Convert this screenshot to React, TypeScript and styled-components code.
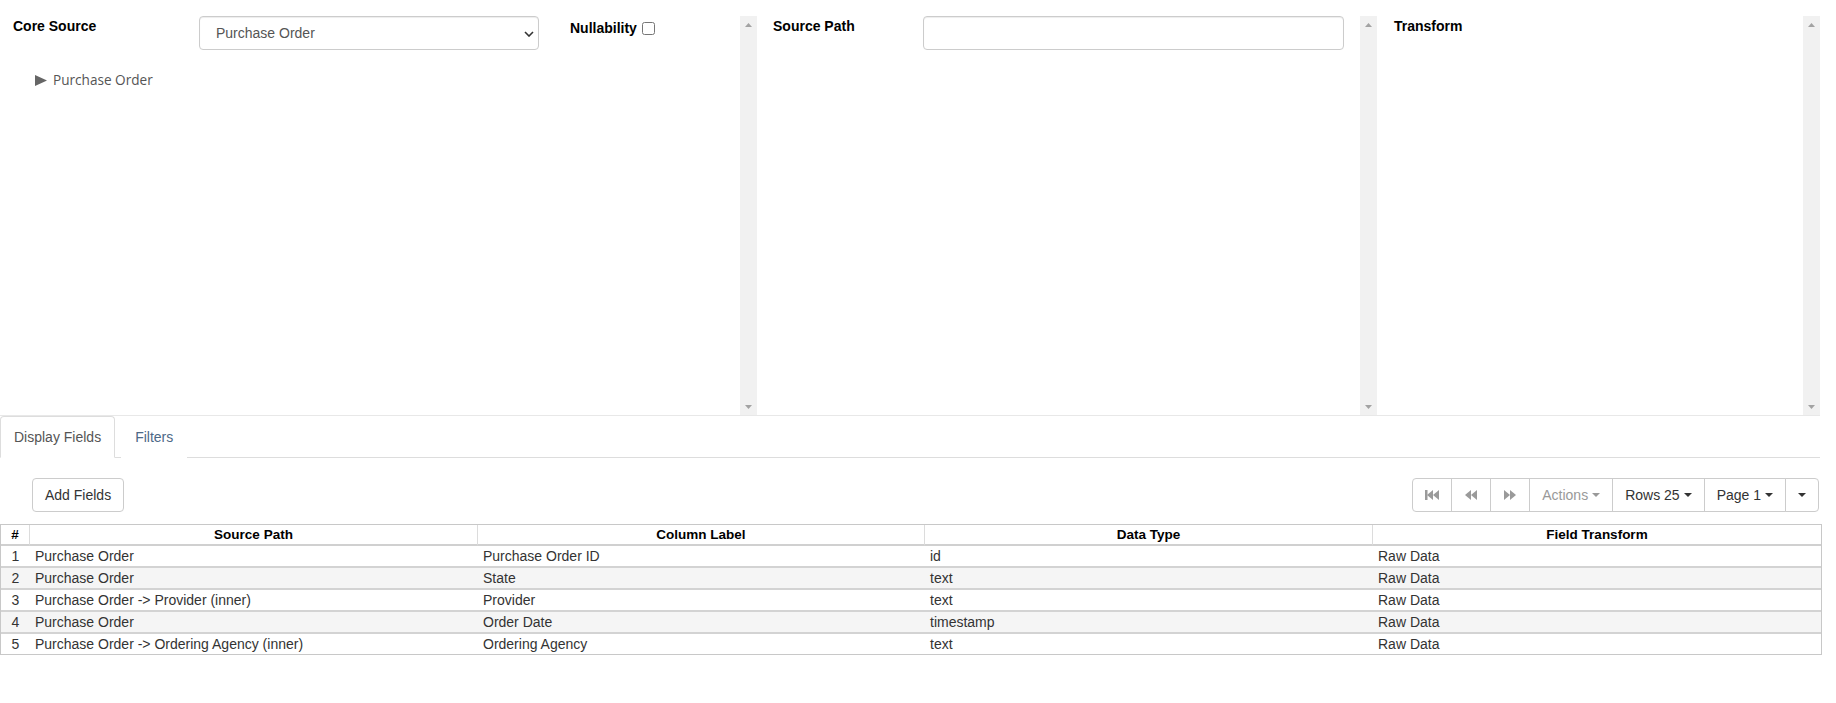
import styled, { createGlobalStyle } from "styled-components";

const GlobalStyle = createGlobalStyle`
  * {
    box-sizing: border-box;
  }
  body {
    margin: 0;
    background: #fff;
    font-family: "Liberation Sans", Arial, sans-serif;
    font-size: 14px;
    color: #333;
  }
`;

const fields = [
  { path: "Purchase Order", label: "Purchase Order ID", type: "id", transform: "Raw Data" },
  { path: "Purchase Order", label: "State", type: "text", transform: "Raw Data" },
  { path: "Purchase Order -> Provider (inner)", label: "Provider", type: "text", transform: "Raw Data" },
  { path: "Purchase Order", label: "Order Date", type: "timestamp", transform: "Raw Data" },
  { path: "Purchase Order -> Ordering Agency (inner)", label: "Ordering Agency", type: "text", transform: "Raw Data" },
];

const Page = styled.div`
  width: 1820px;
`;

/* ---------- top panels ---------- */

const PanelRow = styled.div`
  display: flex;
  margin-top: 16px;
  height: 400px;
  border-bottom: 1px solid #e8e8e8;
`;

const Panel = styled.section<{ $width: number }>`
  display: flex;
  width: ${({ $width }) => $width}px;
  height: 100%;
`;

const PanelBody = styled.div<{ $pad: number }>`
  flex: 1;
  padding: 0 16px 0 ${({ $pad }) => $pad}px;
`;

const ScrollTrack = styled.div`
  width: 17px;
  background: #f1f1f1;
  display: flex;
  flex-direction: column;
  justify-content: space-between;
`;

const ScrollArrow = styled.div`
  height: 17px;
  display: flex;
  align-items: center;
  justify-content: center;
`;

const FieldRow = styled.div`
  display: flex;
  align-items: flex-start;
`;

const FieldLabel = styled.label<{ $width?: number }>`
  width: ${({ $width }) => ($width ? `${$width}px` : "auto")};
  font-weight: bold;
  line-height: 20px;
  color: #000;
`;

const SelectWrap = styled.div`
  position: relative;
  width: 340px;
`;

const Select = styled.select`
  appearance: none;
  width: 100%;
  height: 34px;
  padding: 6px 30px 6px 16px;
  border: 1px solid #ccc;
  border-radius: 4px;
  background: #fff;
  box-shadow: inset 0 1px 1px rgba(0, 0, 0, 0.075);
  font-family: "Liberation Sans", Arial, sans-serif;
  font-size: 14px;
  color: #555;
`;

const Chevron = styled.svg`
  position: absolute;
  right: 5px;
  top: 15px;
  pointer-events: none;
`;

const NullLabel = styled.label`
  display: flex;
  align-items: center;
  height: 24px;
  margin-left: 31px;
  font-weight: bold;
  color: #000;

  input {
    margin: 0 0 0 5px;
    width: 13px;
    height: 13px;
  }
`;

const TextInput = styled.input`
  width: 421px;
  height: 34px;
  padding: 6px 12px;
  border: 1px solid #ccc;
  border-radius: 4px;
  box-shadow: inset 0 1px 1px rgba(0, 0, 0, 0.075);
  font-size: 14px;
`;

const TreeNode = styled.div`
  display: flex;
  align-items: center;
  gap: 6px;
  margin-top: 20px;
  padding-left: 22px;
  line-height: 20px;
  font-family: "Open Sans", "DejaVu Sans", sans-serif;
  font-size: 13.6px;
  color: #555;
`;

/* ---------- tabs ---------- */

const TabBar = styled.nav`
  display: flex;
  border-bottom: 1px solid #ddd;
`;

const Tab = styled.div<{ $active?: boolean }>`
  padding: 10px 13px;
  margin-right: 6px;
  margin-bottom: -1px;
  line-height: 20px;
  border: 1px solid ${({ $active }) => ($active ? "#ddd" : "transparent")};
  border-bottom-color: ${({ $active }) => ($active ? "#fff" : "transparent")};
  border-radius: 4px 4px 0 0;
  background: #fff;
  color: ${({ $active }) => ($active ? "#555" : "#4d6886")};
`;

const TabContent = styled.div`
  padding-top: 20px;
`;

const Toolbar = styled.div`
  display: flex;
  justify-content: space-between;
  align-items: center;
  padding: 0 1px 0 32px;
  margin-bottom: 12px;
`;

const Button = styled.button<{ $muted?: boolean }>`
  display: inline-flex;
  align-items: center;
  height: 34px;
  padding: 6px 12px;
  border: 1px solid #ccc;
  border-radius: 4px;
  background: #fff;
  font-family: "Liberation Sans", Arial, sans-serif;
  font-size: 14px;
  line-height: 20px;
  color: ${({ $muted }) => ($muted ? "#999" : "#333")};
`;

const ButtonGroup = styled.div`
  display: flex;

  ${Button} {
    border-radius: 0;
  }
  ${Button} + ${Button} {
    margin-left: -1px;
  }
  ${Button}:first-child {
    border-radius: 4px 0 0 4px;
  }
  ${Button}:last-child {
    border-radius: 0 4px 4px 0;
  }
`;

const Caret = styled.span<{ $bare?: boolean }>`
  display: inline-block;
  width: 0;
  height: 0;
  margin-left: ${({ $bare }) => ($bare ? 0 : 4)}px;
  border-top: 4px solid currentColor;
  border-left: 4px solid transparent;
  border-right: 4px solid transparent;
`;

const IconSvg = styled.svg`
  display: block;
  fill: #9a9a9a;
`;

/* ---------- table ---------- */

const Table = styled.table`
  width: 1820px;
  table-layout: fixed;
  border-collapse: separate;
  border-spacing: 0;
  border: 1px solid #c8c8c8;
`;

const Th = styled.th`
  padding: 1px 4px;
  line-height: 17px;
  font-size: 13.5px;
  font-weight: bold;
  color: #000;
  text-align: center;
  border-bottom: 2px solid #d0d0d0;
  border-right: 1px solid #dcdcdc;

  &:last-child {
    border-right: none;
  }
`;

const Row = styled.tr<{ $striped: boolean }>`
  background: ${({ $striped }) => ($striped ? "#f5f5f5" : "#fff")};

  &:last-child td {
    border-bottom: none;
  }
`;

const Td = styled.td<{ $center?: boolean }>`
  padding: 1px 5px;
  line-height: 18px;
  white-space: nowrap;
  overflow: hidden;
  text-align: ${({ $center }) => ($center ? "center" : "left")};
  border-bottom: 2px solid #d3d3d3;
`;

function Scrollbar() {
  return (
    <ScrollTrack>
      <ScrollArrow>
        <svg width="7" height="4" viewBox="0 0 7 4">
          <polygon points="3.5,0 7,4 0,4" fill="#a3a3a3" />
        </svg>
      </ScrollArrow>
      <ScrollArrow>
        <svg width="7" height="4" viewBox="0 0 7 4">
          <polygon points="0,0 7,0 3.5,4" fill="#a3a3a3" />
        </svg>
      </ScrollArrow>
    </ScrollTrack>
  );
}

function FastBackwardIcon() {
  return (
    <IconSvg width="14" height="10" viewBox="0 0 14 10">
      <rect x="0" y="0" width="2.5" height="10" />
      <polygon points="2,5 8,0 8,10" />
      <polygon points="8,5 14,0 14,10" />
    </IconSvg>
  );
}

function BackwardIcon() {
  return (
    <IconSvg width="14" height="10" viewBox="0 0 14 10">
      <polygon points="1,5 7,0 7,10" />
      <polygon points="7,5 13,0 13,10" />
    </IconSvg>
  );
}

function ForwardIcon() {
  return (
    <IconSvg width="14" height="10" viewBox="0 0 14 10">
      <polygon points="1,0 7,5 1,10" />
      <polygon points="7,0 13,5 7,10" />
    </IconSvg>
  );
}

export default function App() {
  return (
    <Page>
      <GlobalStyle />
      <PanelRow>
        <Panel $width={757}>
          <PanelBody $pad={13}>
            <FieldRow>
              <FieldLabel $width={186}>Core Source</FieldLabel>
              <SelectWrap>
                <Select defaultValue="po">
                  <option value="po">Purchase Order</option>
                </Select>
                <Chevron width="10" height="6" viewBox="0 0 10 6">
                  <polyline points="1,1 5,5 9,1" fill="none" stroke="#333" strokeWidth="1.6" />
                </Chevron>
              </SelectWrap>
              <NullLabel>
                Nullability
                <input type="checkbox" />
              </NullLabel>
            </FieldRow>
            <TreeNode>
              <svg width="12" height="11" viewBox="0 0 12 11">
                <polygon points="0,0 12,5.5 0,11" fill="#666" />
              </svg>
              Purchase Order
            </TreeNode>
          </PanelBody>
          <Scrollbar />
        </Panel>

        <Panel $width={620}>
          <PanelBody $pad={16}>
            <FieldRow>
              <FieldLabel $width={150}>Source Path</FieldLabel>
              <TextInput type="text" />
            </FieldRow>
          </PanelBody>
          <Scrollbar />
        </Panel>

        <Panel $width={443}>
          <PanelBody $pad={17}>
            <FieldLabel>Transform</FieldLabel>
          </PanelBody>
          <Scrollbar />
        </Panel>
      </PanelRow>

      <TabBar>
        <Tab $active>Display Fields</Tab>
        <Tab>Filters</Tab>
      </TabBar>

      <TabContent>
        <Toolbar>
          <Button>Add Fields</Button>
          <ButtonGroup>
            <Button>
              <FastBackwardIcon />
            </Button>
            <Button>
              <BackwardIcon />
            </Button>
            <Button>
              <ForwardIcon />
            </Button>
            <Button $muted>
              Actions
              <Caret />
            </Button>
            <Button>
              Rows 25
              <Caret />
            </Button>
            <Button>
              Page 1
              <Caret />
            </Button>
            <Button>
              <Caret $bare />
            </Button>
          </ButtonGroup>
        </Toolbar>

        <Table>
          <colgroup>
            <col style={{ width: 29 }} />
            <col style={{ width: 448 }} />
            <col style={{ width: 447 }} />
            <col style={{ width: 448 }} />
            <col style={{ width: 448 }} />
          </colgroup>
          <thead>
            <tr>
              <Th>#</Th>
              <Th>Source Path</Th>
              <Th>Column Label</Th>
              <Th>Data Type</Th>
              <Th>Field Transform</Th>
            </tr>
          </thead>
          <tbody>
            {fields.map((field, index) => (
              <Row key={index} $striped={index % 2 === 1}>
                <Td $center>{index + 1}</Td>
                <Td>{field.path}</Td>
                <Td>{field.label}</Td>
                <Td>{field.type}</Td>
                <Td>{field.transform}</Td>
              </Row>
            ))}
          </tbody>
        </Table>
      </TabContent>
    </Page>
  );
}
